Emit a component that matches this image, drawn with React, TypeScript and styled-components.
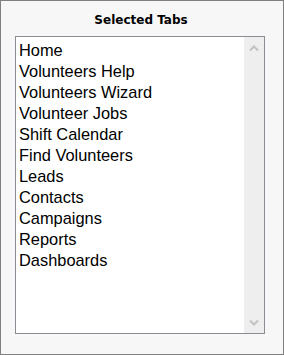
import React from 'react'
import styled, { createGlobalStyle } from 'styled-components'

const GlobalStyle = createGlobalStyle`
  html, body {
    margin: 0;
    padding: 0;
    background: #ffffff;
  }
`

const Panel = styled.div`
  box-sizing: border-box;
  width: 284px;
  height: 355px;
  border: 1px solid #808080;
  background: #f7f7f7;
  display: flex;
  flex-direction: column;
  padding: 0 0 0 14px;
`
const Title = styled.div`
  font-family: 'DejaVu Sans', Verdana, sans-serif;
  font-weight: bold;
  font-size: 12px;
  line-height: 14px;
  color: #000;
  text-align: center;
  margin: 12px 16px 0 0;
  height: 23px;
`
const ListBox = styled.div`
  box-sizing: border-box;
  width: 250px;
  height: 298px;
  border: 1px solid #8a8d94;
  background: #ffffff;
  display: flex;
`
const Items = styled.ul`
  flex: 1;
  list-style: none;
  margin: 0;
  padding: 3px 0 0 3px;
`
const Item = styled.li`
  font-family: 'Liberation Sans', Arial, sans-serif;
  font-size: 16.4px;
  line-height: 21px;
  color: #000;
  white-space: nowrap;
`
const ScrollBar = styled.div`
  width: 20px;
  background: #eeeeee;
  display: flex;
  flex-direction: column;
  justify-content: space-between;
`
const Arrow = styled.div`
  height: 22px;
  display: flex;
  align-items: center;
  justify-content: center;
`

const Chevron = ({ down }: { down?: boolean }) => (
  <svg width='10' height='7' viewBox='0 0 10 7'>
    <path
      d={down ? 'M1 1.5 L5 5.5 L9 1.5' : 'M1 5.5 L5 1.5 L9 5.5'}
      fill='none'
      stroke='#c2c2c2'
      strokeWidth='2'
    />
  </svg>
)

const tabs = [
  'Home',
  'Volunteers Help',
  'Volunteers Wizard',
  'Volunteer Jobs',
  'Shift Calendar',
  'Find Volunteers',
  'Leads',
  'Contacts',
  'Campaigns',
  'Reports',
  'Dashboards'
]

const App = () => (
  <>
    <GlobalStyle />
    <Panel>
      <Title>Selected Tabs</Title>
      <ListBox>
        <Items>
          {tabs.map(tab => (
            <Item key={tab}>{tab}</Item>
          ))}
        </Items>
        <ScrollBar>
          <Arrow>
            <Chevron />
          </Arrow>
          <Arrow>
            <Chevron down />
          </Arrow>
        </ScrollBar>
      </ListBox>
    </Panel>
  </>
)

export default App
